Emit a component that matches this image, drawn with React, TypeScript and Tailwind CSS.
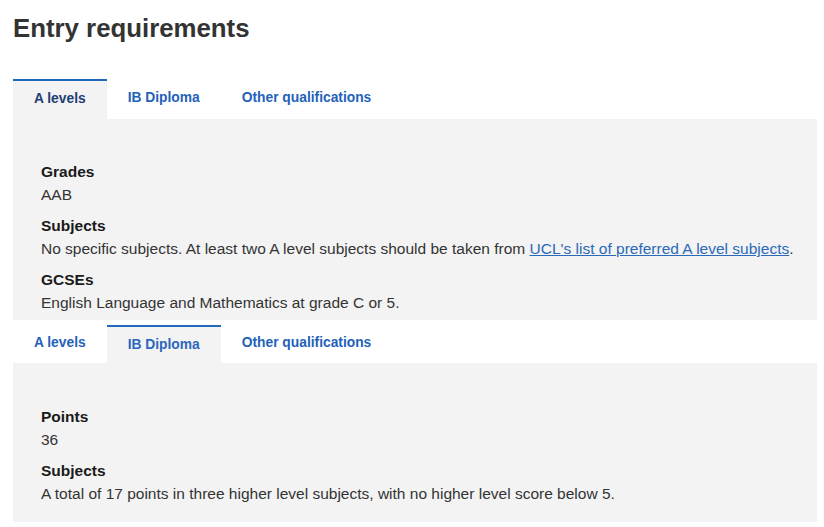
import { useState } from 'react';

type Tab = 'alevels' | 'ib' | 'other';

const tabs: { id: Tab; label: string }[] = [
  { id: 'alevels', label: 'A levels' },
  { id: 'ib', label: 'IB Diploma' },
  { id: 'other', label: 'Other qualifications' },
];

function TabBar({ active, onSelect }: { active: Tab; onSelect: (t: Tab) => void }) {
  return (
    <div className="flex h-[40px] items-stretch">
      {tabs.map((t) =>
        t.id === active ? (
          <button
            key={t.id}
            onClick={() => onSelect(t.id)}
            className="border-t-2 border-[#2167be] bg-[#f3f3f3] px-[21px] pb-[1px] text-[13.8px] font-bold text-[#1c3e74]"
          >
            {t.label}
          </button>
        ) : (
          <button
            key={t.id}
            onClick={() => onSelect(t.id)}
            className="px-[21px] pb-[1px] text-[13.8px] font-bold text-[#1f62b9]"
          >
            {t.label}
          </button>
        )
      )}
    </div>
  );
}

function TabBarSmall({ active, onSelect }: { active: Tab; onSelect: (t: Tab) => void }) {
  return (
    <div className="flex h-[38px] items-stretch">
      {tabs.map((t) =>
        t.id === active ? (
          <button
            key={t.id}
            onClick={() => onSelect(t.id)}
            className="border-t-2 border-[#2167be] bg-[#f3f3f3] px-[21px] text-[13.8px] font-bold text-[#2c67bd]"
          >
            {t.label}
          </button>
        ) : (
          <button
            key={t.id}
            onClick={() => onSelect(t.id)}
            className="-mt-[2px] px-[21px] text-[13.8px] font-bold text-[#1f62b9]"
          >
            {t.label}
          </button>
        )
      )}
    </div>
  );
}

function Item({ label, children }: { label: string; children: React.ReactNode }) {
  return (
    <div className="mb-[9px] last:mb-0">
      <div className="text-[15.5px] font-bold leading-[22px] text-[#1a1a1a]">{label}</div>
      <div className="text-[15.5px] leading-[23px] text-[#333333]">{children}</div>
    </div>
  );
}

export default function App() {
  const [first, setFirst] = useState<Tab>('alevels');
  const [second, setSecond] = useState<Tab>('ib');

  return (
    <div className="min-h-screen bg-white pl-[13px] pr-[7px] pt-[12px]" style={{ fontFamily: '"Liberation Sans", Arial, sans-serif' }}>
      <h1 className="text-[25.8px] font-bold leading-[32px] text-[#333333]">Entry requirements</h1>

      <div className="mt-[35px]">
        <TabBar active={first} onSelect={setFirst} />
        <div className="bg-[#f3f3f3] pb-[6px] pl-[28px] pr-[16px] pt-[42px]">
          <Item label="Grades">AAB</Item>
          <Item label="Subjects">
            No specific subjects. At least two A level subjects should be taken from{' '}
            <a href="#" className="text-[#2a6ab8] underline">
              UCL's list of preferred A level subjects
            </a>
            .
          </Item>
          <Item label="GCSEs">English Language and Mathematics at grade C or 5.</Item>
        </div>
      </div>

      <div className="mt-[5px]">
        <TabBarSmall active={second} onSelect={setSecond} />
        <div className="bg-[#f3f3f3] pb-[17px] pl-[28px] pr-[16px] pt-[43px]">
          <Item label="Points">36</Item>
          <Item label="Subjects">A total of 17 points in three higher level subjects, with no higher level score below 5.</Item>
        </div>
      </div>
    </div>
  );
}
